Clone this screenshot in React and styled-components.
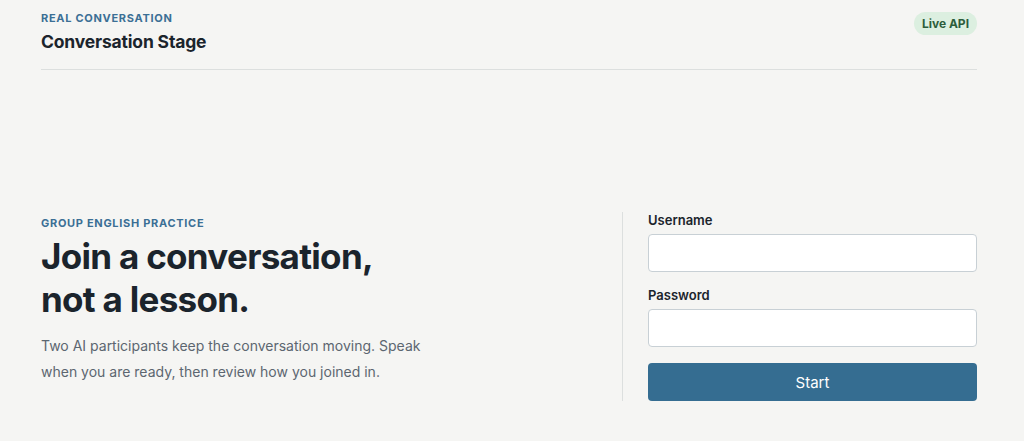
import styled, { createGlobalStyle } from 'styled-components';

const GlobalStyle = createGlobalStyle`
  body {
    margin: 0;
    background: #f5f5f3;
    font-family: Inter, "Noto Sans", sans-serif;
    color: #1b242c;
  }
`;

const Page = styled.div`
  padding: 0 47px 0 41px;
`;

const Header = styled.header`
  display: flex;
  justify-content: space-between;
  align-items: flex-start;
  padding-top: 12px;
  height: 57px;
  border-bottom: 1px solid #dcdfde;
`;

const Eyebrow = styled.div`
  font-size: 11px;
  font-weight: 700;
  letter-spacing: 0.7px;
  text-transform: uppercase;
  color: #3b6f95;
  line-height: 12px;
`;

const Title = styled.h1`
  margin: 7px 0 0;
  font-size: 17.5px;
  font-weight: 700;
  letter-spacing: -0.01em;
  line-height: 22px;
`;

const Badge = styled.span`
  display: inline-flex;
  align-items: center;
  height: 23px;
  padding: 0 8px;
  border-radius: 12px;
  background: #dcefe0;
  color: #2c5d3b;
  font-size: 12px;
  font-weight: 700;
`;

const Main = styled.main`
  display: grid;
  grid-template-columns: 1fr 355px;
  align-items: start;
  padding-top: 142px;
`;

const Intro = styled.section`
  display: flex;
  flex-direction: column;
  padding-top: 5px;
`;

const Heading = styled.h2`
  margin: 6px 0 0;
  font-size: 35px;
  font-weight: 700;
  line-height: 43px;
  letter-spacing: -0.02em;
`;

const Lead = styled.p`
  margin: 12px 0 0;
  max-width: 395px;
  font-size: 14px;
  line-height: 26px;
  color: #5c6670;
`;

const Form = styled.form`
  display: flex;
  flex-direction: column;
  border-left: 1px solid #dcdfde;
  padding-left: 25px;
`;

const Label = styled.label`
  font-size: 13px;
  font-weight: 600;
  line-height: 16px;
  margin-bottom: 6px;
`;

const Input = styled.input`
  height: 38px;
  box-sizing: border-box;
  border: 1px solid #c8d0d5;
  border-radius: 4px;
  background: #fff;
  margin-bottom: ${(p) => p.$gap || 0}px;
  font: inherit;
`;

const Button = styled.button`
  height: 38px;
  border: 0;
  border-radius: 4px;
  background: #356d91;
  color: #fff;
  font-family: inherit;
  font-size: 15px;
  cursor: pointer;
`;

export default function App() {
  return (
    <Page>
      <GlobalStyle />
      <Header>
        <div>
          <Eyebrow>Real conversation</Eyebrow>
          <Title>Conversation Stage</Title>
        </div>
        <Badge>Live API</Badge>
      </Header>
      <Main>
        <Intro>
          <Eyebrow>Group English practice</Eyebrow>
          <Heading>
            Join a conversation,
            <br />
            not a lesson.
          </Heading>
          <Lead>
            Two AI participants keep the conversation moving. Speak when you
            are ready, then review how you joined in.
          </Lead>
        </Intro>
        <Form onSubmit={(e) => e.preventDefault()}>
          <Label htmlFor="username">Username</Label>
          <Input id="username" $gap={15} />
          <Label htmlFor="password">Password</Label>
          <Input id="password" type="password" $gap={16} />
          <Button type="submit">Start</Button>
        </Form>
      </Main>
    </Page>
  );
}
